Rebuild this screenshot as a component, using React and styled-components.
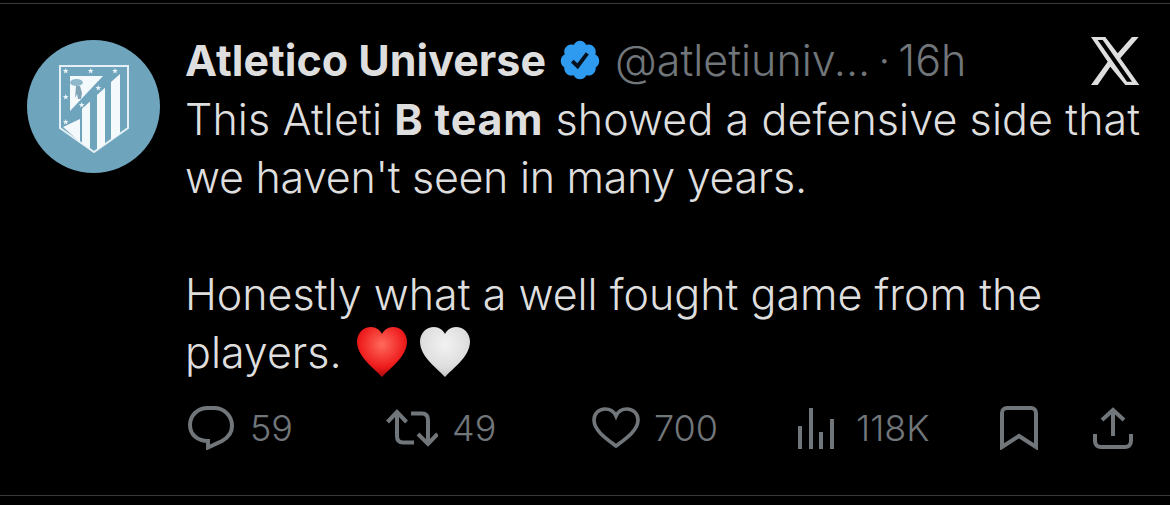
import React from "react";
import styled, { createGlobalStyle } from "styled-components";

const GlobalStyle = createGlobalStyle`
  html, body {
    margin: 0;
    padding: 0;
    background: #000;
  }
  body {
    font-family: Inter, "Liberation Sans", sans-serif;
  }
`;

const TweetCard = () => {
  return (
    <Page>
      <GlobalStyle />
      <Tweet>
        <Avatar>
          <Crest />
        </Avatar>
        <Main>
          <Header>
            <Name>Atletico Universe</Name>
            <Badge />
            <Handle>@atletiuniv...</Handle>
            <Time>
              <Dot>·</Dot>16h
            </Time>
            <XLogo />
          </Header>
          <Body>
            <Line $tracking={0.1}>
              This Atleti <b>B team</b> showed a defensive side that
            </Line>
            <Line $tracking={-0.3}>we haven't seen in many years.</Line>
            <Line />
            <Line>Honestly what a well fought game from the</Line>
            <Line>
              players.
              <Hearts>
                <Heart top="#ff6a5c" bottom="#ee1c1c" edge="#a80808" />
                <Heart top="#f2f2f2" bottom="#dedede" edge="#c4c4c4" />
              </Hearts>
            </Line>
          </Body>
          <Actions>
            <Action $width={198} $gap={16}>
              <ReplyIcon />
              <Count>59</Count>
            </Action>
            <Action $width={206} $gap={14}>
              <RepostIcon />
              <Count>49</Count>
            </Action>
            <Action $width={206} $gap={14}>
              <LikeIcon />
              <Count>700</Count>
            </Action>
            <Action $width={202} $gap={22}>
              <ViewsIcon />
              <Count>118K</Count>
            </Action>
            <Action $width={93}>
              <BookmarkIcon />
            </Action>
            <Action>
              <ShareIcon />
            </Action>
          </Actions>
        </Main>
      </Tweet>
    </Page>
  );
};

const Star = ({ x, y, r = 3 }) => {
  const points = [];
  for (let i = 0; i < 10; i++) {
    const radius = i % 2 === 0 ? r : r * 0.42;
    const angle = (Math.PI / 5) * i - Math.PI / 2;
    points.push(`${x + radius * Math.cos(angle)},${y + radius * Math.sin(angle)}`);
  }
  return <polygon points={points.join(" ")} />;
};

const Crest = () => (
  <CrestSvg viewBox="0 0 70 88">
    <path d="M1 1H69V63L35 87L1 63z" fill="#6fa4bd" stroke="#e4f0f5" strokeWidth="2" />
    <path d="M11 11H44L11 46z" fill="#f4f9fb" />
    <path d="M4 62L21 54V77z" fill="#f4f9fb" />
    <path d="M23 43.700L31 36.400V84L23 78.500z" fill="#f4f9fb" />
    <path d="M38 30L46 22.700V79L38 85z" fill="#f4f9fb" />
    <path d="M52 17L61 9V68.600L52 75z" fill="#f4f9fb" />
    <ellipse cx="17.500" cy="17.500" rx="6.500" ry="3.500" fill="#8fb9cb" />
    <path d="M17 21h4l2 7-1 6h-3l-1-5-2 4z" fill="#7fa4b6" />
    <g fill="#eaf4f8">
      <Star x={6.700} y={6} />
      <Star x={31.700} y={6} />
      <Star x={56} y={6} />
      <Star x={6.700} y={32} />
      <Star x={6.700} y={57} />
      <Star x={39.300} y={23} />
      <Star x={22.700} y={40} />
    </g>
  </CrestSvg>
);

const Badge = () => (
  <BadgeSvg viewBox="0 0 24 24">
    <path
      fill="#2f9bf0"
      d="M22.500 12.500c0-1.580-.875-2.950-2.148-3.600.154-.435.238-.905.238-1.400 0-2.210-1.710-3.998-3.818-3.998-.47 0-.92.084-1.336.25C14.818 2.415 13.510 1.500 12 1.500s-2.816.917-3.437 2.250c-.415-.165-.866-.25-1.336-.25-2.110 0-3.818 1.790-3.818 4 0 .494.083.964.237 1.400-1.272.65-2.147 2.018-2.147 3.600 0 1.495.782 2.798 1.942 3.486-.02.17-.032.34-.032.514 0 2.210 1.708 4 3.818 4 .47 0 .92-.086 1.335-.25.62 1.334 1.926 2.250 3.437 2.250 1.512 0 2.818-.916 3.437-2.250.415.163.865.248 1.336.248 2.110 0 3.818-1.790 3.818-4 0-.174-.012-.344-.033-.513 1.158-.687 1.943-1.990 1.943-3.484z"
    />
    <path d="M7.800 12.600l2.900 2.800 5.300-7" fill="none" stroke="#04121f" strokeWidth="2.100" />
  </BadgeSvg>
);

const XLogo = () => (
  <XSvg viewBox="0 0 50 48">
    <path
      fill="#dedede"
      fillRule="evenodd"
      d="M1 0H15.300L27.700 16.300L42 0H48.700L30.300 21.300L49.300 48H35.300L20.300 29.700L7.700 48H1L17.700 24.700zM7.700 3H12.700L42 44.700H37z"
    />
  </XSvg>
);

const Heart = ({ top, bottom, edge }) => {
  const id = `heart-${top.slice(1)}`;
  return (
    <svg width="52" height="52" viewBox="0 0 52 52">
      <defs>
        <radialGradient id={id} cx="50%" cy="35%" r="65%">
          <stop offset="0%" stopColor={top} />
          <stop offset="70%" stopColor={bottom} />
          <stop offset="100%" stopColor={edge} />
        </radialGradient>
      </defs>
      <path
        d="M26 51C19 43 1 31 1 15.500C1 7 7.500 1 15 1C20 1 24 4 26 8C28 4 32 1 37 1C44.500 1 51 7 51 15.500C51 31 33 43 26 51z"
        fill={`url(#${id})`}
      />
    </svg>
  );
};

const ReplyIcon = () => (
  <IconSvg width="46" height="44" viewBox="0 0 46 44">
    <path
      d="M20 2h6c10 0 18 7.500 18 18 0 8-5.500 12.500-10 15l-14 6.500V35C10 35 2 29 2 19 2 9 10 2 20 2z"
      fill="none"
      stroke="currentColor"
      strokeWidth="4"
    />
  </IconSvg>
);

const RepostIcon = () => (
  <IconSvg width="52" height="38" viewBox="0 0 52 38">
    <path
      d="M1.500 13L11 3l9.500 10M11 3v24c0 4 2 6.500 6 6.500h11M25 4.500h11c4 0 6 2.500 6 6.500v24M32 25l10 10 9.500-10"
      fill="none"
      stroke="currentColor"
      strokeWidth="4"
    />
  </IconSvg>
);

const LikeIcon = () => (
  <IconSvg width="48" height="42" viewBox="0 0 48 42">
    <path
      d="M24 39C16 33 2 24 2 13 2 6.500 7 2 13 2c5 0 9 2.500 11 7 2-4.500 6-7 11-7 6 0 11 4.500 11 11 0 11-14 20-22 26z"
      fill="none"
      stroke="currentColor"
      strokeWidth="3.600"
    />
  </IconSvg>
);

const ViewsIcon = () => (
  <IconSvg width="36" height="41" viewBox="0 0 36 41" fill="currentColor">
    <rect x="0" y="18" width="4" height="23" />
    <rect x="11" y="0" width="4" height="41" />
    <rect x="21" y="24" width="4" height="17" />
    <rect x="32" y="11" width="4" height="30" />
  </IconSvg>
);

const BookmarkIcon = () => (
  <IconSvg width="38" height="44" viewBox="0 0 38 44">
    <path
      d="M2 41V7c0-3 2-5 5-5h24c3 0 5 2 5 5v34L19 30z"
      fill="none"
      stroke="currentColor"
      strokeWidth="4"
    />
  </IconSvg>
);

const ShareIcon = () => (
  <IconSvg width="40" height="42" viewBox="0 0 40 42">
    <path
      d="M9 13L20 3l11 10M20 3v26M2 27v7c0 4 2.500 6 6 6h24c3.500 0 6-2 6-6v-7"
      fill="none"
      stroke="currentColor"
      strokeWidth="4"
    />
  </IconSvg>
);

const Page = styled.div`
  width: 1170px;
  height: 505px;
  overflow: hidden;
  padding-top: 3px;
  box-sizing: border-box;
  background: #000;
`;

const Tweet = styled.article`
  height: 493px;
  box-sizing: border-box;
  border-top: 1px solid #3a3a3c;
  border-bottom: 1px solid #3a3a3c;
  padding: 34px 30px 0 27px;
  display: flex;
  gap: 25px;
`;

const Avatar = styled.div`
  width: 133px;
  height: 133px;
  margin-top: 2px;
  flex: none;
  border-radius: 50%;
  background: #6fa4bd;
  display: flex;
  align-items: center;
  justify-content: center;
`;

const CrestSvg = styled.svg`
  width: 70px;
  height: 88px;
  margin-top: 5px;
`;

const Main = styled.div`
  flex: 1;
  min-width: 0;
  display: flex;
  flex-direction: column;
`;

const Header = styled.div`
  height: 44px;
  display: flex;
  align-items: center;
`;

const Name = styled.span`
  font-size: 43px;
  font-weight: 700;
  color: #dedede;
  white-space: nowrap;
`;

const BadgeSvg = styled.svg`
  width: 44px;
  height: 44px;
  margin: 0 13px 0 12px;
  flex: none;
`;

const Handle = styled.span`
  font-size: 43px;
  font-weight: 300;
  color: #71767b;
  white-space: nowrap;
`;

const Time = styled(Handle)`
  margin-left: 8px;
`;

const Dot = styled.span`
  margin-right: 8px;
`;

const XSvg = styled.svg`
  width: 50px;
  height: 48px;
  margin-left: auto;
  margin-top: 2px;
  flex: none;
`;

const Body = styled.div`
  margin-top: 8px;
  font-size: 43px;
  font-weight: 300;
  color: #dedede;

  b {
    font-weight: 700;
    letter-spacing: 0.8px;
  }
`;

const Line = styled.div`
  height: 58.300px;
  line-height: 58.300px;
  white-space: pre;
  letter-spacing: ${(props) => props.$tracking || 0}px;
`;

const Hearts = styled.span`
  display: inline-flex;
  gap: 11px;
  margin-left: 14px;
  vertical-align: -10px;
`;

const Actions = styled.div`
  margin-top: 25px;
  margin-left: 3px;
  display: flex;
  align-items: center;
  color: #71767b;
`;

const Action = styled.div`
  width: ${(props) => (props.$width ? `${props.$width}px` : "auto")};
  flex: none;
  display: flex;
  align-items: center;
  gap: ${(props) => props.$gap || 0}px;
`;

const IconSvg = styled.svg`
  flex: none;
`;

const Count = styled.span`
  font-size: 36px;
  font-weight: 300;
`;

export default TweetCard;
